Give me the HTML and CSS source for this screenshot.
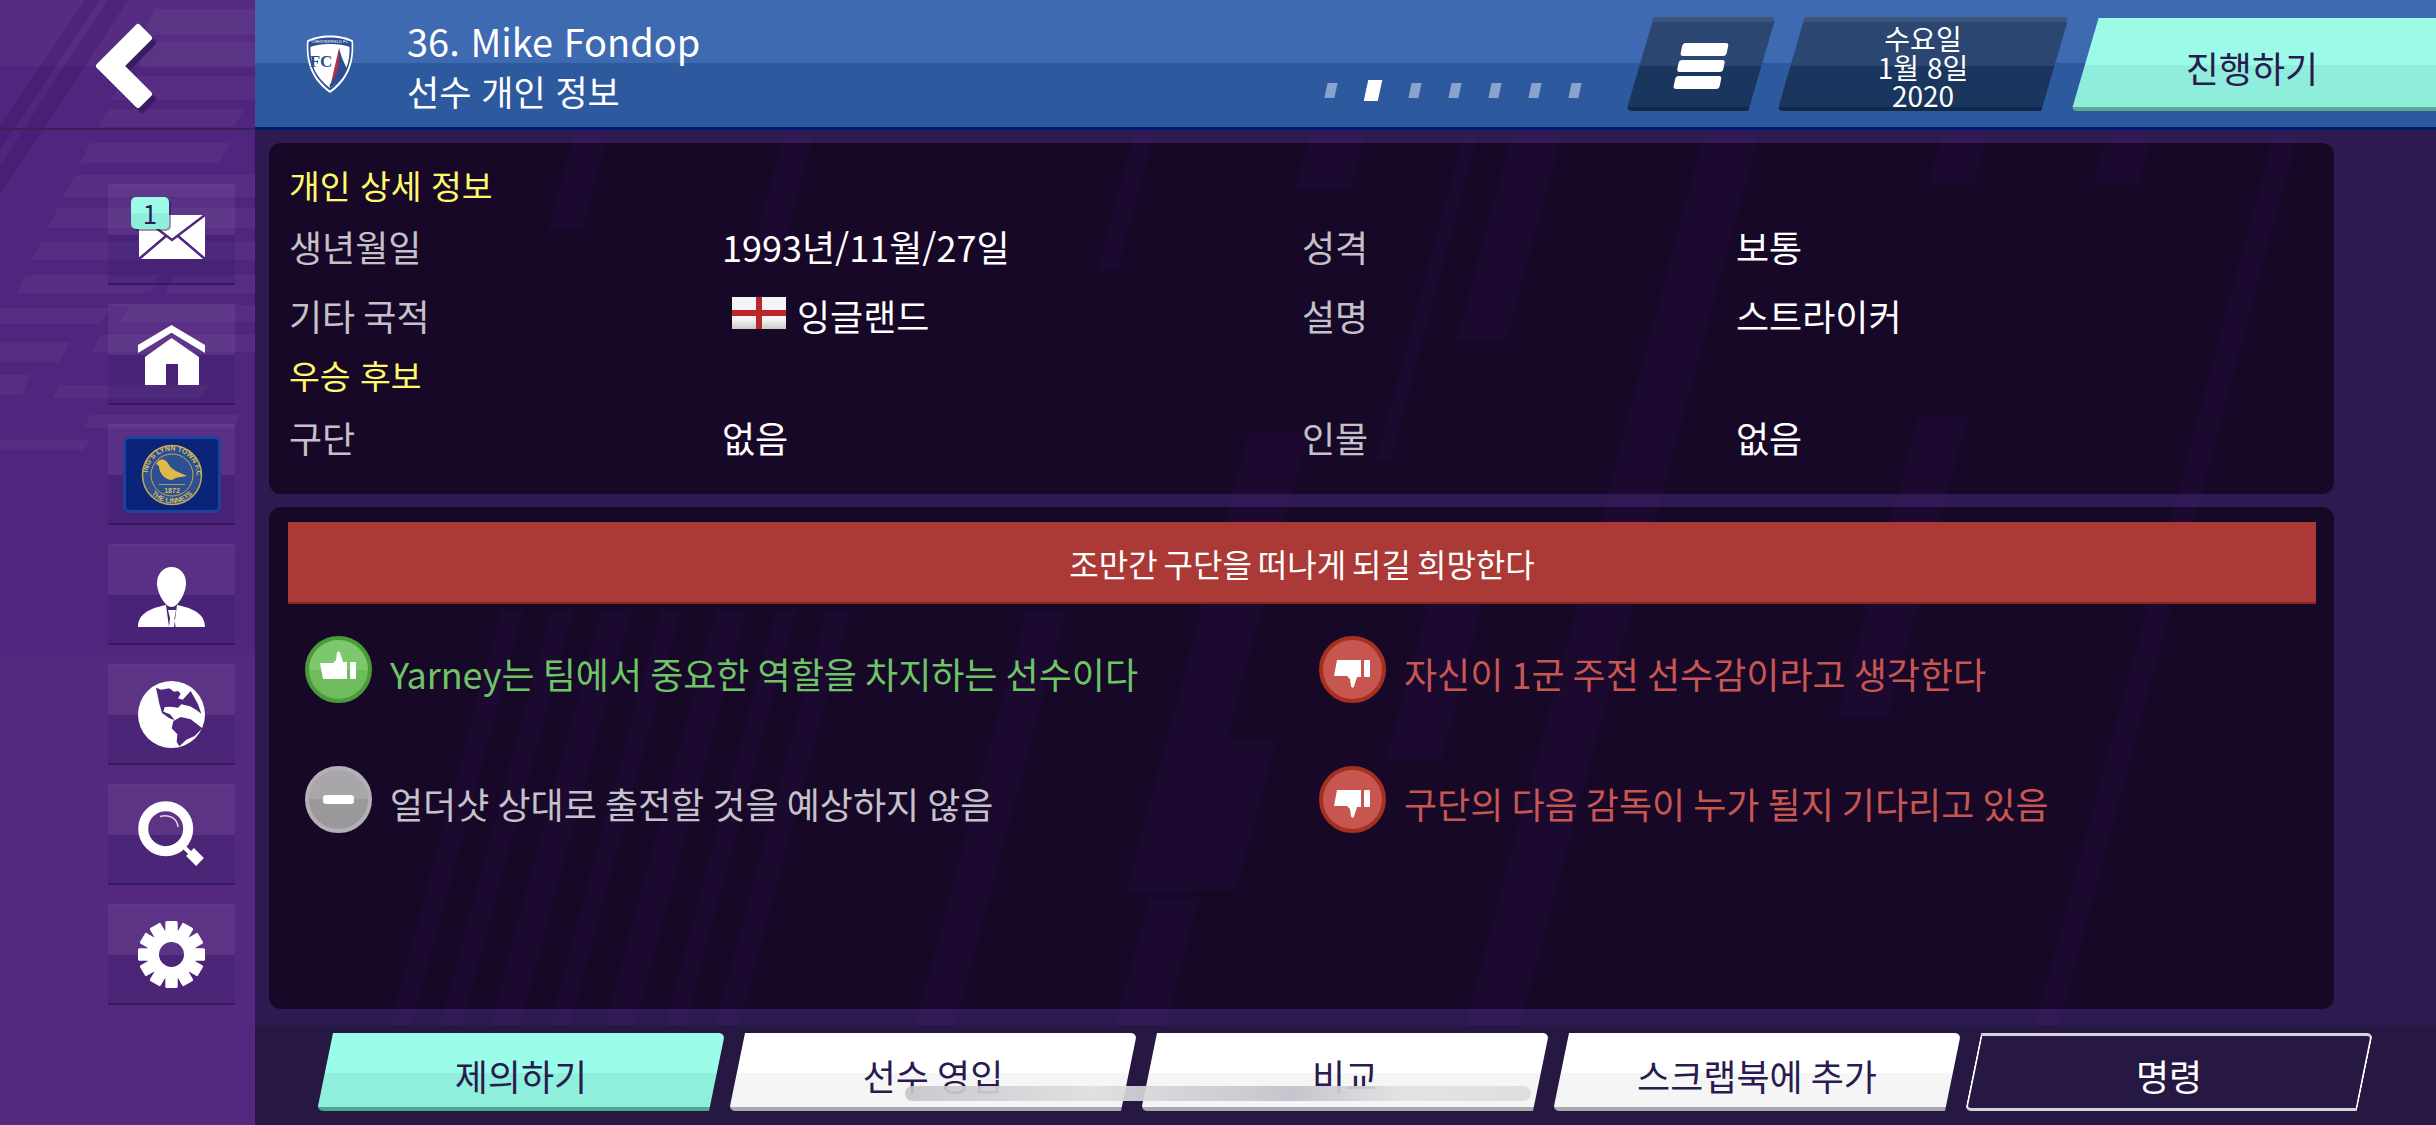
FILE: index.html
```html
<!DOCTYPE html>
<html lang="ko">
<head>
<meta charset="utf-8">
<title>선수 개인 정보</title>
<link rel="stylesheet" href="styles.css">
</head>
<body>
<div class="app">
  <aside class="sidebar">
    <svg class="side-art" viewBox="0 0 255 1125" aria-hidden="true">
      <rect class="art-top" x="0" y="0" width="255" height="66"/>
      <g class="art-light">
        <polygon points="155,9 255,9 255,35 142,35"/>
        <polygon points="150,42 255,42 255,67 138,67"/>
        <polygon points="125,76 255,76 255,100 112,100"/>
        <polygon points="108,109 245,109 233,127 98,127"/>
        <polygon points="90,143 230,143 220,163 80,163"/>
        <polygon points="75,175 255,175 255,197 63,197"/>
        <polygon points="58,208 255,208 255,228 48,228"/>
        <polygon points="42,242 255,242 255,260 32,260"/>
        <polygon points="26,275 160,275 150,293 17,293"/>
        <polygon points="175,275 255,275 255,293 165,293"/>
        <polygon points="0,308 110,308 100,324 0,324"/>
        <polygon points="130,305 255,305 255,322 120,322"/>
        <polygon points="0,342 70,342 60,362 0,362"/>
        <polygon points="100,335 255,335 255,352 92,352"/>
        <polygon points="0,375 30,375 22,395 0,395"/>
        <polygon points="60,385 210,385 200,398 52,398"/>
        <polygon points="90,415 240,415 233,428 84,428"/>
        <polygon points="0,440 90,440 84,450 0,450"/>
      </g>
      <g class="art-dark">
        <polygon points="85,0 100,0 0,150 0,125"/>
        <polygon points="108,0 128,0 0,195 0,165"/>
      </g>
      <rect class="art-base" x="0" y="655" width="255" height="470"/>
    </svg>
    <div class="back-row">
      <svg class="back-icon" width="80" height="100" viewBox="90 18 80 100" aria-hidden="true">
        <polygon class="back-shadow" points="103,71 142,32 153,43 125,71 153,99 142,110"/>
        <polygon class="back-shape" points="99,66 138,27 149,38 121,66 149,94 138,105"/>
      </svg>
    </div>
    <nav class="side-nav">
      <button class="nav-btn">
        <svg class="nav-icon" viewBox="0 0 67 67" aria-hidden="true">
          <path class="white" d="M1 14H67V58H1Z"/>
          <path class="env-line" d="M1 14 34 39 67 14M1 58 28 35M67 58 40 35"/>
        </svg>
        <span class="mail-badge">1</span>
      </button>
      <button class="nav-btn">
        <svg class="nav-icon" viewBox="0 0 67 67" aria-hidden="true">
          <path class="white" d="M33.5 4 67 24V32L33.5 11.700 0 32V24Z"/>
          <path class="white" d="M33.500 17 61 36V64H40V43H28V64H7V36Z"/>
        </svg>
      </button>
      <button class="nav-btn">
        <span class="club-badge">
          <svg width="62" height="62" viewBox="0 0 62 62" aria-hidden="true">
            <defs>
              <path id="ring-top" d="M6.500 31A24.500 24.500 0 0 1 55.500 31"/>
              <path id="ring-bottom" d="M3 31A28 28 0 0 0 59 31"/>
            </defs>
            <circle class="ring-blue" cx="31" cy="31" r="29.500"/>
            <circle class="ring-line" cx="31" cy="31" r="21"/>
            <text class="ring-text"><textPath href="#ring-top" startOffset="50%" text-anchor="middle">KING'S LYNN TOWN F.C.</textPath></text>
            <text class="ring-text"><textPath href="#ring-bottom" startOffset="50%" text-anchor="middle">THE LINNETS</textPath></text>
            <path class="bird" d="M17 17C21 14 26 16 28 21 31 26 37 28 46 32 40 33 35 33 31 36 25 36 18 30 18 22L15 20Z"/>
            <path class="ring-bar" d="M18 40H44V41H18Z"/>
            <text class="ring-year" x="31" y="49" text-anchor="middle">1872</text>
          </svg>
        </span>
      </button>
      <button class="nav-btn">
        <svg class="nav-icon" viewBox="0 0 67 67" aria-hidden="true">
          <path class="white" d="M33.500 6C42 6 48 13 48 22 48 32 40 46 33.500 46 27 46 19 32 19 22 19 13 25 6 33.500 6Z"/>
          <path class="white" d="M0 66C0 55 8 48 28 44L31 66ZM67 66C67 55 59 48 39 44L36 66ZM30 49H38L36.500 57 37.500 66H31L32 57Z"/>
        </svg>
      </button>
      <button class="nav-btn">
        <svg class="nav-icon" viewBox="0 0 67 67" aria-hidden="true">
          <circle class="white" cx="33.500" cy="33.500" r="33.500"/>
          <g transform="translate(-47.300,-40) scale(.3333)">
            <path class="land" d="M196 140 L212 146 L236 142 L250 152 L262 150 L270 158 L262 172 L276 176 L300 150 L322 190 L332 218 L316 206 L298 196 L272 190 L262 200 L240 197 L222 198 L218 212 L238 220 L252 238 L236 232 L214 216 L206 188Z"/>
            <path class="land" d="M248 240 L270 228 L300 235 L335 262 L312 285 L287 296 L266 316 L258 302 L260 280 L243 262Z"/>
          </g>
        </svg>
      </button>
      <button class="nav-btn">
        <svg class="nav-icon" viewBox="0 0 67 67" aria-hidden="true">
          <circle class="mag-ring" cx="27.700" cy="27.700" r="22.500"/>
          <path class="mag-neck" d="M47 47 55 55"/>
          <path class="mag-handle" d="M52 51 62 61"/>
          <path class="mag-glint" d="M22 15.500C31 13 39 17 40 26"/>
        </svg>
      </button>
      <button class="nav-btn">
        <svg class="nav-icon" viewBox="0 0 67 67" aria-hidden="true">
          <circle class="gear-body" cx="33.500" cy="33.500" r="18.500"/>
          <g class="white" transform="translate(33.500,33.500)">
            <rect x="-6.200" y="-33.500" width="12.400" height="12" rx="1.500"/>
            <rect x="-6.200" y="-33.500" width="12.400" height="12" rx="1.500" transform="rotate(30)"/>
            <rect x="-6.200" y="-33.500" width="12.400" height="12" rx="1.500" transform="rotate(60)"/>
            <rect x="-6.200" y="-33.500" width="12.400" height="12" rx="1.500" transform="rotate(90)"/>
            <rect x="-6.200" y="-33.500" width="12.400" height="12" rx="1.500" transform="rotate(120)"/>
            <rect x="-6.200" y="-33.500" width="12.400" height="12" rx="1.500" transform="rotate(150)"/>
            <rect x="-6.200" y="-33.500" width="12.400" height="12" rx="1.500" transform="rotate(180)"/>
            <rect x="-6.200" y="-33.500" width="12.400" height="12" rx="1.500" transform="rotate(210)"/>
            <rect x="-6.200" y="-33.500" width="12.400" height="12" rx="1.500" transform="rotate(240)"/>
            <rect x="-6.200" y="-33.500" width="12.400" height="12" rx="1.500" transform="rotate(270)"/>
            <rect x="-6.200" y="-33.500" width="12.400" height="12" rx="1.500" transform="rotate(300)"/>
            <rect x="-6.200" y="-33.500" width="12.400" height="12" rx="1.500" transform="rotate(330)"/>
          </g>
        </svg>
      </button>
    </nav>
  </aside>

  <main class="main">
    <header class="topbar">
      <svg class="crest" width="48" height="58" viewBox="0 0 48 58" aria-hidden="true">
        <path class="crest-edge" d="M24 .5C33 .5 42 2.500 47 5.500 48.500 25 44 44 24 58 4 44-.5 25 1 5.500 6 2.500 15 .5 24 .5Z"/>
        <path class="crest-blue" d="M24 2.500C32 2.500 41 4.500 45.500 7 46.500 25 42 42 24 55.500 6 42 1.500 25 2.500 7 7 4.500 16 2.500 24 2.500Z"/>
        <path class="crest-edge" d="M24 9C32 9 39 10 43.500 12 44 27 40 41 24 53 8 41 4 27 4.500 12 9 10 16 9 24 9Z"/>
        <path class="crest-sail" d="M33 13C35 25 38 34 39 38L35 41 25 48Z"/>
        <path class="crest-navy" d="M33 13C36 25 41 33 41 34 39 41 32 47 24 53 23 50 24 49 25 48 32 40 34 28 33 13Z"/>
        <text class="crest-name" x="24" y="8" text-anchor="middle">CHESTERFIELD FC</text>
        <text class="crest-letters" x="15" y="32" text-anchor="middle">FC</text>
      </svg>
      <div class="titles">
        <div class="title-line title-name">36. Mike Fondop</div>
        <div class="title-line title-sub">선수 개인 정보</div>
      </div>
      <div class="dots">
        <span class="dot"></span>
        <span class="dot dot-active"></span>
        <span class="dot"></span>
        <span class="dot"></span>
        <span class="dot"></span>
        <span class="dot"></span>
        <span class="dot"></span>
      </div>
      <button class="top-btn menu-btn">
        <span class="bars"><span class="bar"></span><span class="bar"></span><span class="bar"></span></span>
      </button>
      <button class="top-btn date-btn">
        <span>수요일</span><span>1월 8일</span><span>2020</span>
      </button>
      <button class="top-btn go-btn"><span>진행하기</span></button>
    </header>

    <div class="content">
      <svg class="content-art" viewBox="0 0 2181 895" aria-hidden="true">
        <g transform="skewX(-15)">
          <rect x="1450" y="0" width="55" height="895"/>
          <rect x="1258" y="0" width="50" height="210"/>
          <rect x="1210" y="0" width="14" height="330"/>
          <rect x="1688" y="0" width="45" height="53"/>
          <rect x="1853" y="0" width="45" height="53"/>
          <rect x="1056" y="0" width="55" height="60"/>
          <rect x="1740" y="287" width="50" height="300"/>
          <rect x="1075" y="303" width="60" height="460"/>
          <rect x="1300" y="470" width="55" height="160"/>
          <rect x="2020" y="0" width="24" height="895"/>
          <rect x="1135" y="610" width="50" height="150"/>
          <rect x="1100" y="768" width="50" height="127"/>
          <rect x="375" y="480" width="22" height="415"/>
          <rect x="425" y="480" width="22" height="415"/>
          <rect x="475" y="480" width="30" height="415"/>
          <rect x="535" y="480" width="20" height="415"/>
          <rect x="590" y="480" width="30" height="415"/>
          <rect x="650" y="480" width="20" height="415"/>
          <rect x="700" y="480" width="24" height="415"/>
          <rect x="900" y="480" width="40" height="415"/>
          <rect x="320" y="0" width="34" height="100"/>
          <rect x="530" y="0" width="30" height="130"/>
          <rect x="880" y="0" width="20" height="140"/>
        </g>
      </svg>

      <section class="panel info-panel">
        <h2 class="heading">개인 상세 정보</h2>
        <div class="label">생년월일</div>
        <div class="value">1993년/11월/27일</div>
        <div class="label">성격</div>
        <div class="value">보통</div>
        <div class="label">기타 국적</div>
        <div class="value nation">
          <svg class="flag" width="54" height="32" viewBox="0 0 54 32" aria-hidden="true">
            <defs>
              <linearGradient id="flag-shade" x1="0" y1="0" x2="0" y2="1">
                <stop offset=".7" stop-color="#f4f4f4"/>
                <stop offset="1" stop-color="#c9c9c9"/>
              </linearGradient>
            </defs>
            <rect width="54" height="32" fill="url(#flag-shade)"/>
            <path class="flag-cross" d="M24 0H30V13H54V19H30V32H24V19H0V13H24Z"/>
          </svg>
          <span>잉글랜드</span>
        </div>
        <div class="label">설명</div>
        <div class="value">스트라이커</div>
        <h2 class="heading">우승 후보</h2>
        <div class="label">구단</div>
        <div class="value">없음</div>
        <div class="label">인물</div>
        <div class="value">없음</div>
      </section>

      <section class="panel status-panel">
        <div class="banner">조만간 구단을 떠나게 되길 희망한다</div>
        <div class="status-grid">
          <div class="status status-good">
            <span class="status-icon">
              <svg viewBox="0 0 67 67" aria-hidden="true">
                <path class="white" d="M15 27H28L31 24 32 16.500C33 15 35 15 35 16.500L38 26H42V43H18Z"/>
                <rect class="white" x="45" y="26" width="6" height="17" rx="1"/>
              </svg>
            </span>
            <span>Yarney는 팀에서 중요한 역할을 차지하는 선수이다</span>
          </div>
          <div class="status status-bad">
            <span class="status-icon">
              <svg viewBox="0 0 67 67" aria-hidden="true">
                <g transform="matrix(1 0 0 -1 0 67)">
                  <path class="white" d="M15 27H28L31 24 32 16.500C33 15 35 15 35 16.500L38 26H42V43H18Z"/>
                  <rect class="white" x="45" y="26" width="6" height="17" rx="1"/>
                </g>
              </svg>
            </span>
            <span>자신이 1군 주전 선수감이라고 생각한다</span>
          </div>
          <div class="status status-neutral">
            <span class="status-icon">
              <svg viewBox="0 0 67 67" aria-hidden="true">
                <rect class="white" x="18" y="29" width="31" height="9" rx="3"/>
              </svg>
            </span>
            <span>얼더샷 상대로 출전할 것을 예상하지 않음</span>
          </div>
          <div class="status status-bad">
            <span class="status-icon">
              <svg viewBox="0 0 67 67" aria-hidden="true">
                <g transform="matrix(1 0 0 -1 0 67)">
                  <path class="white" d="M15 27H28L31 24 32 16.500C33 15 35 15 35 16.500L38 26H42V43H18Z"/>
                  <rect class="white" x="45" y="26" width="6" height="17" rx="1"/>
                </g>
              </svg>
            </span>
            <span>구단의 다음 감독이 누가 될지 기다리고 있음</span>
          </div>
        </div>
      </section>
    </div>

    <footer class="footer">
      <button class="foot-btn foot-teal"><span>제의하기</span></button>
      <button class="foot-btn foot-white"><span>선수 영입</span></button>
      <button class="foot-btn foot-white"><span>비교</span></button>
      <button class="foot-btn foot-white"><span>스크랩북에 추가</span></button>
      <button class="foot-btn foot-dark"><span>명령</span></button>
    </footer>
  </main>
</div>
<div class="home-pill"></div>
</body>
</html>
```

FILE: styles.css
```css
* { box-sizing: border-box; }

html, body {
  margin: 0;
  padding: 0;
  width: 2436px;
  height: 1125px;
  overflow: hidden;
  background: #261743;
  font-family: "Noto Sans CJK KR", "Noto Sans", sans-serif;
  font-weight: 400;
}

button {
  font: inherit;
  border: 0;
  padding: 0;
  background: none;
  color: inherit;
}

.white { fill: #fff; }

.app {
  display: flex;
  width: 2436px;
  height: 1125px;
}

/* sidebar */
.sidebar {
  position: relative;
  flex: 0 0 255px;
  background: #50257e;
  overflow: hidden;
}

.side-art {
  position: absolute;
  inset: 0;
  width: 255px;
  height: 1125px;
}

.art-top { fill: rgba(255, 255, 255, .035); }
.art-light polygon { fill: rgba(255, 255, 255, .04); }
.art-dark polygon { fill: rgba(50, 15, 90, .25); }
.art-base { fill: #54287e; }

.back-row {
  position: relative;
  height: 130px;
  border-bottom: 2px solid #38215c;
  padding: 18px 0 0 90px;
}

.back-icon { display: block; }
.back-shadow { fill: #3a1c62; stroke: #3a1c62; stroke-width: 6; stroke-linejoin: round; }
.back-shape { fill: #fff; stroke: #fff; stroke-width: 6; stroke-linejoin: round; }

.side-nav {
  position: relative;
  display: flex;
  flex-direction: column;
  gap: 19px;
  padding: 54px 0 0 108px;
}

.nav-btn {
  position: relative;
  display: flex;
  align-items: center;
  justify-content: center;
  width: 127px;
  height: 101px;
  background: linear-gradient(180deg, rgba(255, 255, 255, .05) 0 50%, rgba(30, 20, 80, .16) 50% 100%);
  border-top: 2px solid rgba(255, 255, 255, .1);
  border-bottom: 2px solid #38195e;
}

.nav-icon {
  display: block;
  width: 67px;
  height: 67px;
}

.env-line { fill: none; stroke: #4f267c; stroke-width: 2.500; }

.mail-badge {
  position: absolute;
  left: 23px;
  top: 11px;
  width: 38px;
  height: 32px;
  border-radius: 5px;
  background: linear-gradient(180deg, #9bfbe6 0 50%, #8deedb 50% 100%);
  box-shadow: 2px 2px 0 rgba(40, 20, 70, .45);
  color: #2b1a55;
  font-size: 26px;
  line-height: 32px;
  text-align: center;
}

.club-badge {
  display: flex;
  align-items: center;
  justify-content: center;
  width: 98px;
  height: 77px;
  background: #0a2479;
  border: 3px solid #1f429d;
  border-radius: 7px;
}

.club-badge svg { display: block; }
.ring-blue { fill: #2c5092; stroke: #c4a850; stroke-width: 1.500; }
.ring-line { fill: #2c5092; stroke: #c4a850; stroke-width: 1; }
.ring-text { fill: #d8bd62; font-family: "Liberation Sans", sans-serif; font-size: 7px; font-weight: 700; }
.ring-year { fill: #d8bd62; font-family: "Liberation Sans", sans-serif; font-size: 7px; font-weight: 700; }
.ring-bar { fill: #a59a6c; }
.bird { fill: #e0b94a; }

.land { fill: #4f267c; }

.mag-ring { fill: none; stroke: #fff; stroke-width: 10; }
.mag-neck { fill: none; stroke: #fff; stroke-width: 4; }
.mag-handle { fill: none; stroke: #fff; stroke-width: 11; }
.mag-glint { fill: none; stroke: #fff; stroke-width: 1.500; opacity: .8; }

.gear-body { fill: none; stroke: #fff; stroke-width: 12; }

/* main column */
.main {
  flex: 1 1 auto;
  min-width: 0;
  display: flex;
  flex-direction: column;
}

.topbar {
  flex: 0 0 130px;
  display: flex;
  align-items: flex-start;
  overflow: hidden;
  background: linear-gradient(180deg, #3e6ab1 0 63px, #2d5a9f 63px 100%);
  border-bottom: 3px solid #011b69;
  color: #fff;
}

.crest {
  flex: none;
  margin: 35px 0 0 51px;
}

.crest-edge { fill: #fff; }
.crest-blue { fill: #2a4d94; }
.crest-sail { fill: #b3303f; }
.crest-navy { fill: #2a4d94; }
.crest-name { fill: #fff; font-family: "Liberation Sans", sans-serif; font-size: 4px; }
.crest-letters { fill: #2a4d94; font-family: "Liberation Serif", serif; font-size: 17px; font-weight: 700; }

.titles {
  margin: 16px 0 0 53px;
}

.title-line {
  line-height: 50px;
  white-space: nowrap;
}

.title-name { font-size: 38px; }
.title-sub { font-size: 35px; }

.dots {
  display: flex;
  align-items: center;
  gap: 30px;
  height: 21px;
  margin: 80px 60px 0 auto;
}

.dot {
  display: block;
  width: 10px;
  height: 15px;
  background: #8aa3cc;
  transform: skewX(-12deg);
}

.dot-active {
  width: 14px;
  height: 21px;
  background: #fff;
}

.top-btn {
  position: relative;
  flex: none;
  height: 94px;
  margin: 17px 29px 0 0;
  color: #fff;
  text-align: center;
}

.top-btn::before {
  content: "";
  position: absolute;
  inset: 0;
  border-radius: 0 5px 0 5px;
  background: linear-gradient(180deg, #3b5479 0 5px, #2b4670 5px 49px, #1a365f 49px 90px, #12294a 90px 100%);
  transform: skewX(-16.300deg);
}

.top-btn > * { position: relative; }

.menu-btn {
  display: flex;
  align-items: center;
  justify-content: center;
  width: 122px;
}

.bars {
  display: flex;
  flex-direction: column;
  gap: 4px;
  margin-top: 3px;
  transform: skewX(-12deg);
}

.bar {
  display: block;
  width: 46px;
  height: 12.500px;
  border-radius: 3px;
  background: #fff;
}

.date-btn {
  display: flex;
  flex-direction: column;
  align-items: center;
  padding-top: 7px;
  width: 264px;
  font-size: 28px;
  line-height: 28.500px;
}

.go-btn {
  display: flex;
  align-items: center;
  justify-content: center;
  width: 334px;
  height: 93px;
  margin: 18px 17px 0 1px;
  color: #2a1a4f;
  font-size: 36px;
  padding-top: 4px;
}

.go-btn::before {
  right: -60px;
  background: linear-gradient(180deg, #9bfbe6 0 47px, #8eeedb 47px 89px, #5ea793 89px 100%);
}

.content {
  position: relative;
  flex: 1 1 auto;
  min-height: 0;
  display: flex;
  flex-direction: column;
  gap: 13px;
  padding: 13px 102px 16px 14px;
  background: #2d1a50;
}

.content-art {
  position: absolute;
  inset: 0;
  z-index: 1;
  width: 2181px;
  height: 895px;
  pointer-events: none;
}

.content-art rect { fill: rgba(120, 40, 170, .06); }

.panel {
  border-radius: 12px;
  background: #170828;
}

.panel > * {
  position: relative;
  z-index: 2;
}

.info-panel {
  flex: 0 0 351px;
  display: grid;
  grid-template-columns: 433px 580px 434px 1fr;
  grid-template-rows: 61px 69px 60px 62px 62px;
  align-items: start;
  padding: 17px 0 0 20px;
  font-size: 36px;
  line-height: 50px;
}

.heading {
  grid-column: 1 / -1;
  margin: 0;
  color: #fdfb6a;
  font-size: 33.500px;
  font-weight: 400;
  line-height: 50px;
}

.label {
  color: #c4c1c9;
  word-spacing: -2px;
}

.value { color: #fff; }

.nation {
  display: flex;
  align-items: center;
  gap: 11px;
  padding-left: 10px;
}

.flag {
  display: block;
  margin-top: -5px;
}

.flag-cross { fill: #b9272c; }

.status-panel {
  flex: 1 1 auto;
  padding: 15px 18px 0 19px;
}

.banner {
  height: 82px;
  background: #ab3a37;
  border-bottom: 2px solid #8c2423;
  color: #fff;
  font-size: 32px;
  word-spacing: -3px;
  line-height: 82px;
  text-align: center;
}

.status-grid {
  display: grid;
  grid-template-columns: 1014px 1fr;
  grid-auto-rows: 130px;
  padding: 32px 0 0 17px;
}

.status {
  display: flex;
  align-items: flex-start;
  gap: 18px;
  font-size: 36px;
  word-spacing: -2px;
  line-height: 74px;
  white-space: nowrap;
}

.status-icon {
  flex: none;
  width: 67px;
  height: 67px;
  border-radius: 50%;
  border: 4px solid;
}

.status-icon svg {
  display: block;
  width: 67px;
  height: 67px;
  margin: -4px;
}

.status-good { color: #6dc565; }
.status-good .status-icon {
  border-color: #4a9a3a;
  background: linear-gradient(180deg, #7dc86c 0 50%, #6ebc5e 50% 100%);
}

.status-bad { color: #c85651; }
.status-bad .status-icon {
  border-color: #a5301f;
  background: #c85650;
}

.status-neutral { color: #c6c2cb; }
.status-neutral .status-icon {
  border-color: #b3b0b5;
  background: linear-gradient(180deg, #a9a6aa 0 50%, #9b989c 50% 100%);
}

/* footer */
.footer {
  flex: 0 0 100px;
  display: flex;
  gap: 20px;
  padding: 8px 0 0 70px;
  background: #261743;
}

.foot-btn {
  position: relative;
  flex: none;
  display: flex;
  align-items: center;
  justify-content: center;
  width: 392px;
  height: 78px;
  color: #2a1a4f;
  font-size: 36px;
  word-spacing: -2px;
  padding-top: 6px;
}

.foot-btn::before {
  content: "";
  position: absolute;
  inset: 0;
  border-radius: 0 6px 0 6px;
  transform: skewX(-11.600deg);
}

.foot-btn > span { position: relative; }

.foot-teal::before {
  background: linear-gradient(180deg, #99fde9 0 40px, #8ef0dc 40px 74px, #4fa78f 74px 100%);
}

.foot-white::before {
  background: linear-gradient(180deg, #fff 0 40px, #f5f5f5 40px 74px, #a9a8aa 74px 100%);
}

.foot-dark { color: #fff; }

.foot-dark::before {
  background: #261743;
  border: 2px solid #fff;
  border-top: 3px solid #d6d2dc;
  border-bottom: 3px solid #d6d2dc;
}

.home-pill {
  position: absolute;
  left: 905px;
  top: 1086px;
  width: 626px;
  height: 15px;
  border-radius: 8px;
  background: linear-gradient(90deg, rgba(200, 196, 206, .92), rgba(222, 222, 222, .92) 30%, rgba(196, 192, 204, .92) 62%, rgba(226, 226, 226, .92) 80%, rgba(220, 220, 220, .92));
}
```
